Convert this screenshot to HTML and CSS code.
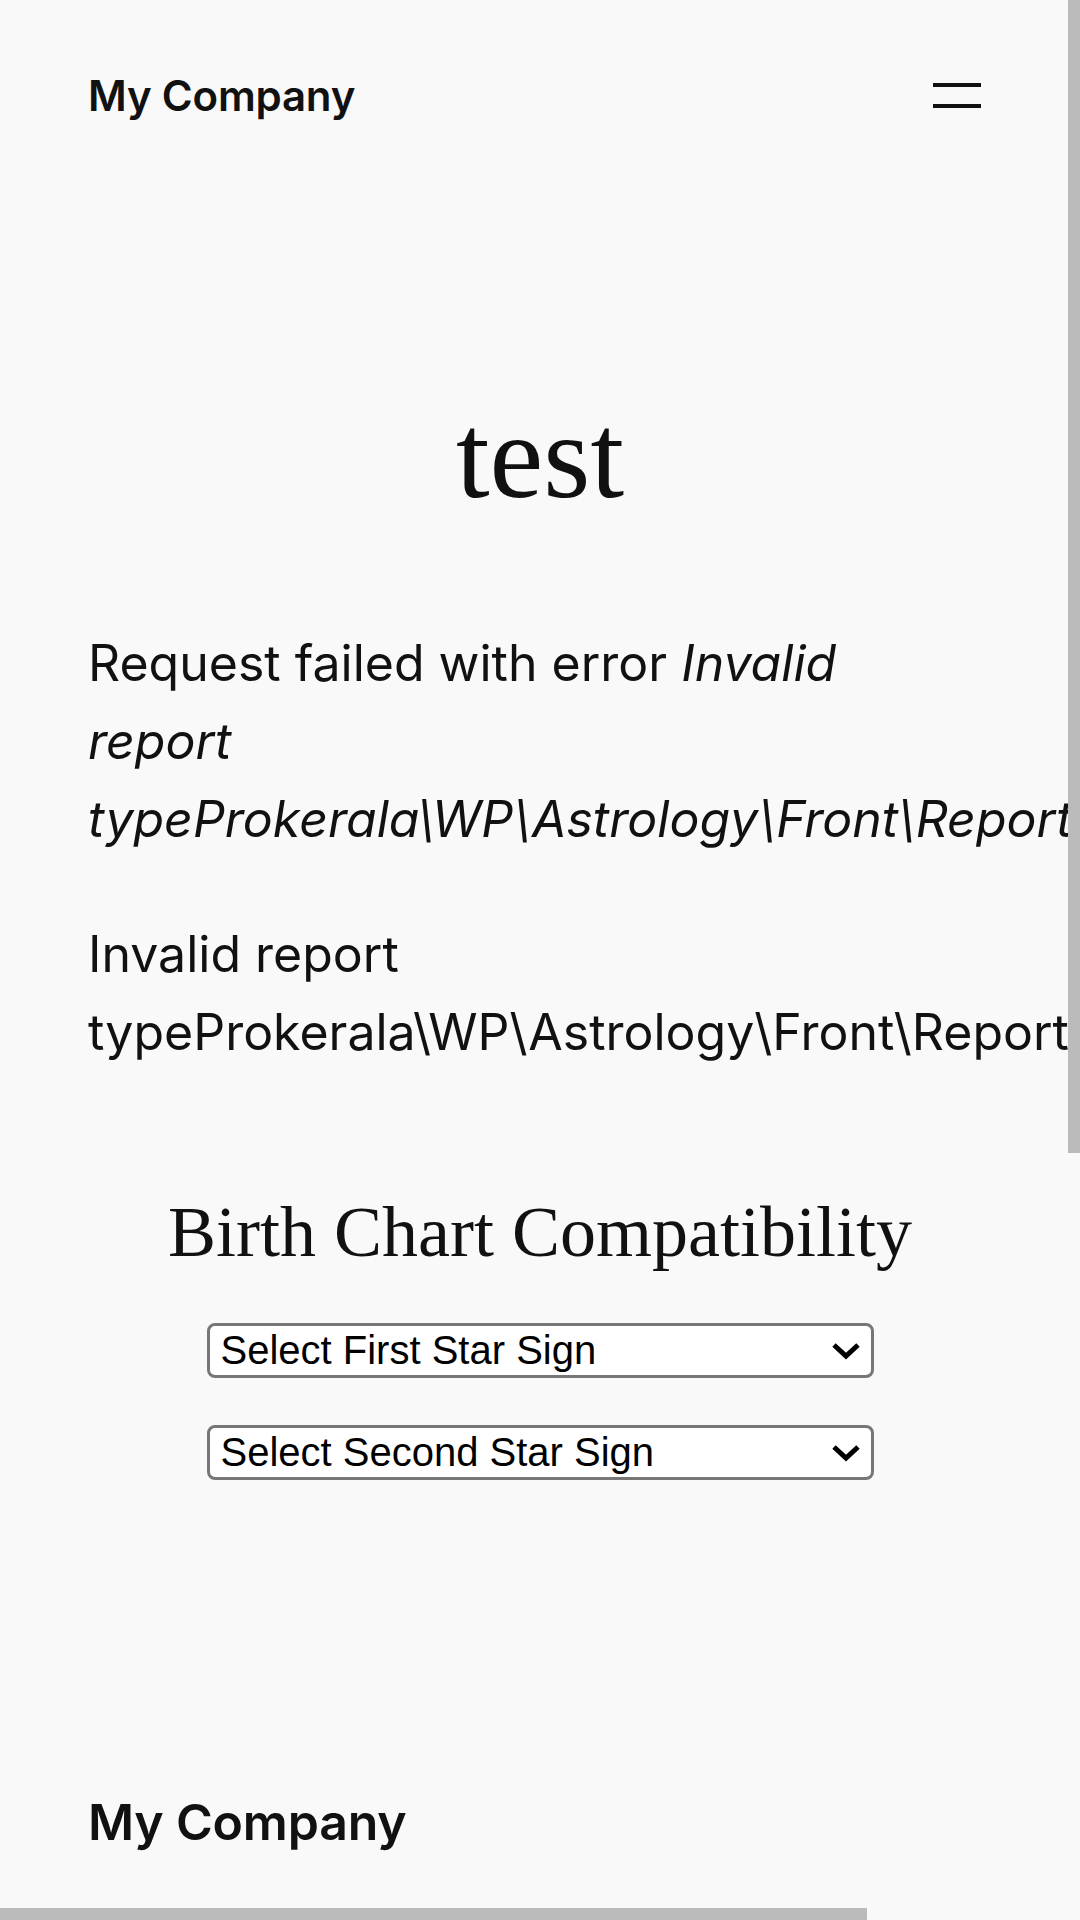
FILE: index.html
```html
<!DOCTYPE html>
<html lang="en">
<head>
<meta charset="UTF-8">
<meta name="viewport" content="width=device-width, initial-scale=1.0">
<title>test – My Company</title>
<link rel="stylesheet" href="styles.css">
</head>
<body>
<header class="site-header">
    <a class="site-title" href="#">My Company</a>
    <button class="menu-toggle" type="button" aria-label="Open menu">
        <svg width="48" height="26" viewBox="0 0 48 26" aria-hidden="true">
            <rect x="0" y="0" width="48" height="4" fill="#111"></rect>
            <rect x="0" y="21" width="48" height="4" fill="#111"></rect>
        </svg>
    </button>
</header>

<main class="site-main">
    <h1 class="page-title">test</h1>

    <p class="notice">Request failed with error <em>Invalid report typeProkerala\WP\Astrology\Front\Report\BirthChartCompatibility</em></p>

    <p class="notice">Invalid report typeProkerala\WP\Astrology\Front\Report\BirthChartCompatibility</p>

    <section class="compat">
        <h2 class="compat-title">Birth Chart Compatibility</h2>
        <form class="compat-form">
            <div class="select-wrap">
                <select id="firstSign" name="firstSign">
                    <option value="">Select First Star Sign</option>
                    <option value="aries">Aries</option>
                    <option value="taurus">Taurus</option>
                    <option value="gemini">Gemini</option>
                    <option value="cancer">Cancer</option>
                    <option value="leo">Leo</option>
                    <option value="virgo">Virgo</option>
                    <option value="libra">Libra</option>
                    <option value="scorpio">Scorpio</option>
                    <option value="sagittarius">Sagittarius</option>
                    <option value="capricorn">Capricorn</option>
                    <option value="aquarius">Aquarius</option>
                    <option value="pisces">Pisces</option>
                </select>
                <svg class="chevron" width="30" height="18" viewBox="0 0 30 18" aria-hidden="true">
                    <polyline points="3,3 15,14 27,3" fill="none" stroke="#000" stroke-width="5"></polyline>
                </svg>
            </div>
            <div class="select-wrap">
                <select id="secondSign" name="secondSign">
                    <option value="">Select Second Star Sign</option>
                    <option value="aries">Aries</option>
                    <option value="taurus">Taurus</option>
                    <option value="gemini">Gemini</option>
                    <option value="cancer">Cancer</option>
                    <option value="leo">Leo</option>
                    <option value="virgo">Virgo</option>
                    <option value="libra">Libra</option>
                    <option value="scorpio">Scorpio</option>
                    <option value="sagittarius">Sagittarius</option>
                    <option value="capricorn">Capricorn</option>
                    <option value="aquarius">Aquarius</option>
                    <option value="pisces">Pisces</option>
                </select>
                <svg class="chevron" width="30" height="18" viewBox="0 0 30 18" aria-hidden="true">
                    <polyline points="3,3 15,14 27,3" fill="none" stroke="#000" stroke-width="5"></polyline>
                </svg>
            </div>
        </form>
    </section>
</main>

<footer class="site-footer">
    <p class="footer-title">My Company</p>
</footer>

<div class="scroll-thumb scroll-y"></div>
<div class="scroll-thumb scroll-x"></div>
</body>
</html>
```

FILE: styles.css
```css
body {
    margin: 0;
    background-color: #f9f9f9;
    color: #111;
    font-family: Inter, "Noto Sans", sans-serif;
    overflow: hidden;
}
.site-header {
    display: flex;
    justify-content: space-between;
    align-items: center;
    padding: 70px 99px 0 88px;
}
.site-title {
    color: #111;
    text-decoration: none;
    font-size: 42px;
    font-weight: 600;
    line-height: 1.25;
    letter-spacing: -0.2px;
}
.menu-toggle {
    display: flex;
    padding: 0;
    border: none;
    background: none;
    cursor: pointer;
}
.site-main {
    padding: 261px 88px 0 88px;
}
.page-title {
    margin: 0 0 95px 0;
    text-align: center;
    font-family: "Liberation Serif", "Times New Roman", serif;
    font-weight: 400;
    font-size: 121px;
    line-height: 145px;
}
.notice {
    margin: 0 0 57px 0;
    font-size: 50px;
    line-height: 78px;
}
.notice em {
    font-style: italic;
}
.compat {
    display: flex;
    flex-direction: column;
    align-items: center;
    padding-top: 61px;
}
.compat-title {
    margin: 0 0 48px 0;
    font-family: "Liberation Serif", "Times New Roman", serif;
    font-weight: 400;
    font-size: 72px;
    line-height: 86px;
}
.compat-form {
    display: flex;
    flex-direction: column;
    gap: 47px;
}
.select-wrap {
    position: relative;
    width: 667px;
}
.select-wrap select {
    appearance: none;
    -webkit-appearance: none;
    width: 100%;
    height: 55px;
    padding: 0 60px 0 11px;
    border: 3px solid #777;
    border-radius: 8px;
    background-color: #fff;
    color: #000;
    font-family: "Liberation Sans", Arial, sans-serif;
    font-size: 40px;
}
.chevron {
    position: absolute;
    right: 13px;
    top: 19px;
    pointer-events: none;
}
.site-footer {
    padding: 312px 88px 0 88px;
}
.footer-title {
    margin: 0;
    font-size: 50px;
    font-weight: 600;
    line-height: 1.2;
    letter-spacing: -0.2px;
}
.scroll-thumb {
    position: fixed;
    background-color: #bbb;
}
.scroll-y {
    top: 0;
    right: 0;
    width: 12px;
    height: 1153px;
}
.scroll-x {
    left: 0;
    bottom: 0;
    width: 867px;
    height: 12px;
}
```
